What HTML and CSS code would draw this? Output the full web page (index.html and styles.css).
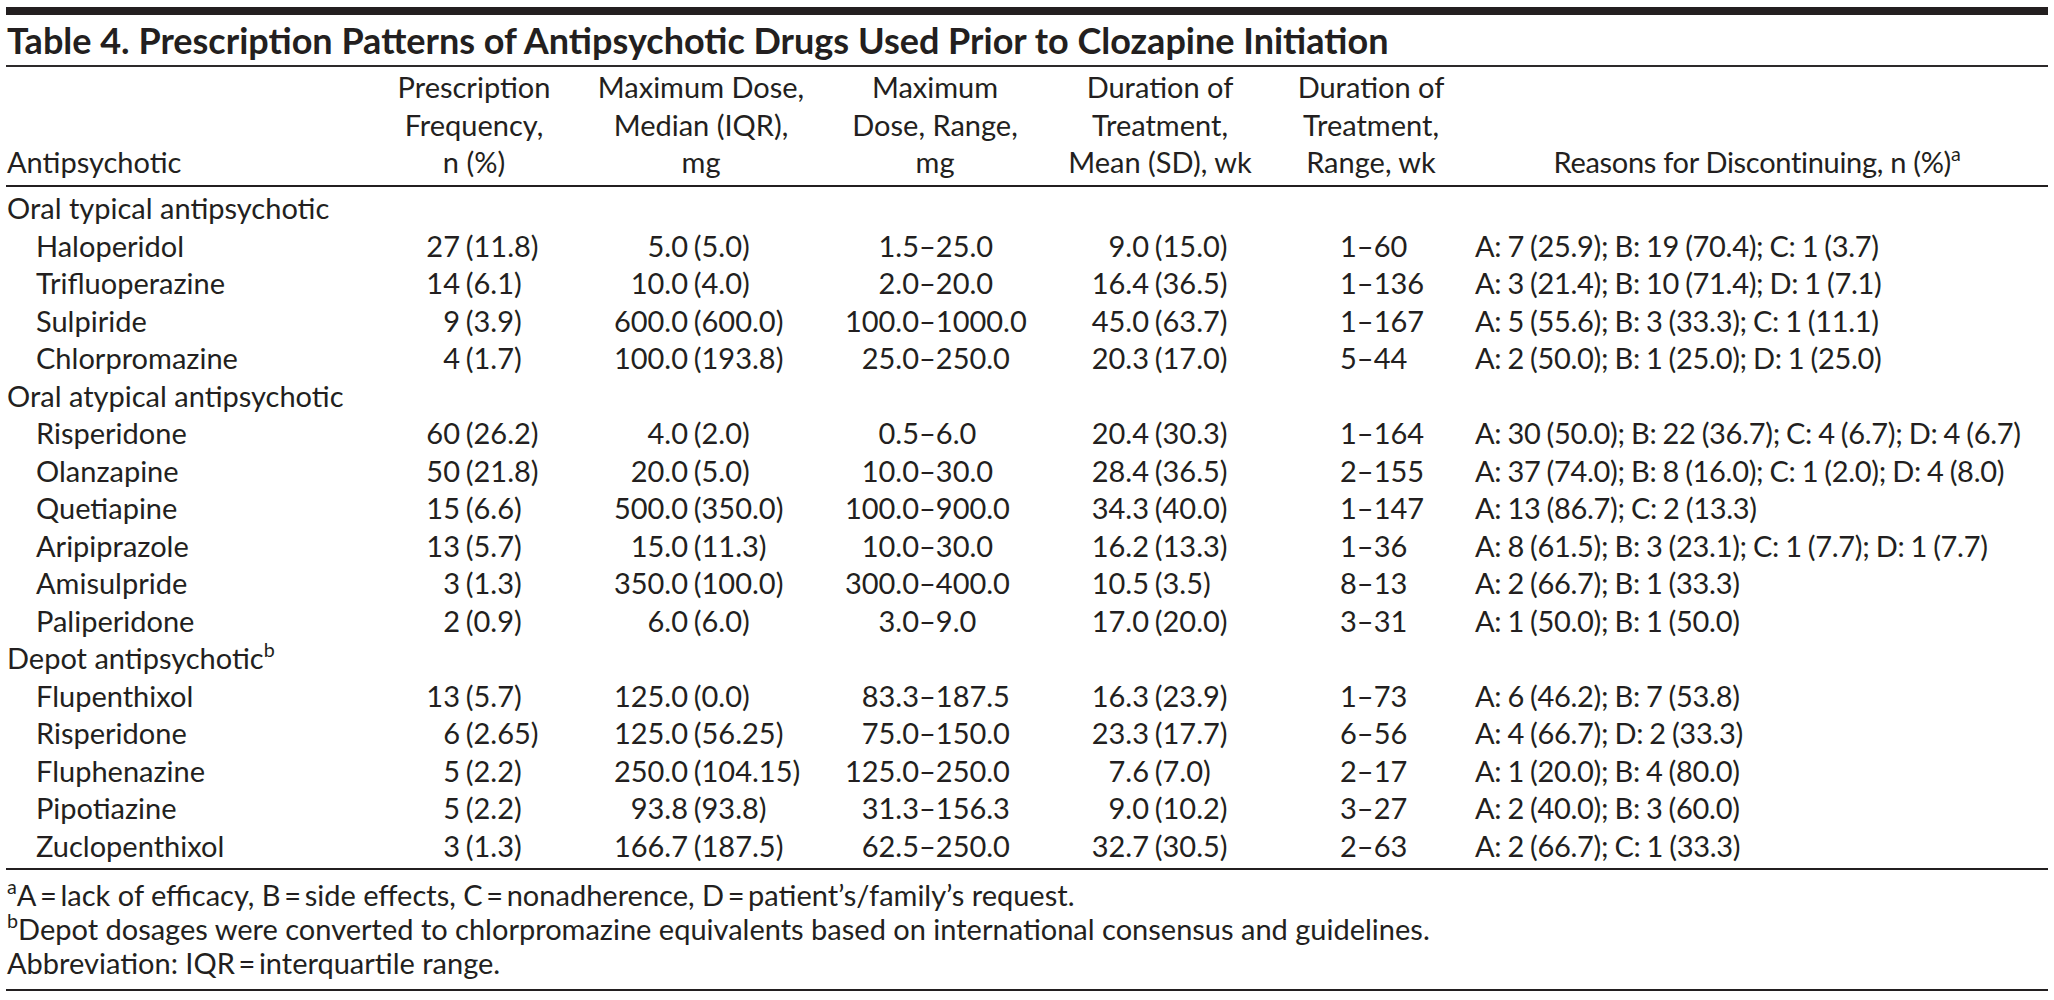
FILE: index.html
```html
<!DOCTYPE html>
<html lang="en">
<head>
<meta charset="utf-8">
<title>Table 4</title>
<link rel="stylesheet" href="styles.css">
</head>
<body>
<div class="page">
  <div class="topbar"></div>
  <h1 class="title">Table 4. Prescription Patterns of Antipsychotic Drugs Used Prior to Clozapine Initiation</h1>

  <div class="grid head">
    <div class="h h0">Antipsychotic</div>
    <div class="h">Prescription<br>Frequency,<br>n (%)</div>
    <div class="h">Maximum Dose,<br>Median (IQR),<br>mg</div>
    <div class="h">Maximum<br>Dose, Range,<br>mg</div>
    <div class="h">Duration of<br>Treatment,<br>Mean (SD), wk</div>
    <div class="h">Duration of<br>Treatment,<br>Range, wk</div>
    <div class="h h6">Reasons for Discontinuing, n (%)<sup>a</sup></div>
  </div>

  <div class="body">
    <div class="grid row"><div class="c0">Oral typical antipsychotic</div></div>
    <div class="grid row"><div class="c0 item">Haloperidol</div><div class="num c1"><span class="l">27</span><span class="r">(11.8)</span></div><div class="num c2"><span class="l">5.0</span><span class="r">(5.0)</span></div><div class="rng c3"><span class="l">1.5</span><span>–25.0</span></div><div class="num c4"><span class="l">9.0</span><span class="r">(15.0)</span></div><div class="c5">1–60</div><div class="c6">A: 7 (25.9); B: 19 (70.4); C: 1 (3.7)</div></div>
    <div class="grid row"><div class="c0 item">Trifluoperazine</div><div class="num c1"><span class="l">14</span><span class="r">(6.1)</span></div><div class="num c2"><span class="l">10.0</span><span class="r">(4.0)</span></div><div class="rng c3"><span class="l">2.0</span><span>–20.0</span></div><div class="num c4"><span class="l">16.4</span><span class="r">(36.5)</span></div><div class="c5">1–136</div><div class="c6">A: 3 (21.4); B: 10 (71.4); D: 1 (7.1)</div></div>
    <div class="grid row"><div class="c0 item">Sulpiride</div><div class="num c1"><span class="l">9</span><span class="r">(3.9)</span></div><div class="num c2"><span class="l">600.0</span><span class="r">(600.0)</span></div><div class="rng c3"><span class="l">100.0</span><span>–1000.0</span></div><div class="num c4"><span class="l">45.0</span><span class="r">(63.7)</span></div><div class="c5">1–167</div><div class="c6">A: 5 (55.6); B: 3 (33.3); C: 1 (11.1)</div></div>
    <div class="grid row"><div class="c0 item">Chlorpromazine</div><div class="num c1"><span class="l">4</span><span class="r">(1.7)</span></div><div class="num c2"><span class="l">100.0</span><span class="r">(193.8)</span></div><div class="rng c3"><span class="l">25.0</span><span>–250.0</span></div><div class="num c4"><span class="l">20.3</span><span class="r">(17.0)</span></div><div class="c5">5–44</div><div class="c6">A: 2 (50.0); B: 1 (25.0); D: 1 (25.0)</div></div>
    <div class="grid row"><div class="c0">Oral atypical antipsychotic</div></div>
    <div class="grid row"><div class="c0 item">Risperidone</div><div class="num c1"><span class="l">60</span><span class="r">(26.2)</span></div><div class="num c2"><span class="l">4.0</span><span class="r">(2.0)</span></div><div class="rng c3"><span class="l">0.5</span><span>–6.0</span></div><div class="num c4"><span class="l">20.4</span><span class="r">(30.3)</span></div><div class="c5">1–164</div><div class="c6">A: 30 (50.0); B: 22 (36.7); C: 4 (6.7); D: 4 (6.7)</div></div>
    <div class="grid row"><div class="c0 item">Olanzapine</div><div class="num c1"><span class="l">50</span><span class="r">(21.8)</span></div><div class="num c2"><span class="l">20.0</span><span class="r">(5.0)</span></div><div class="rng c3"><span class="l">10.0</span><span>–30.0</span></div><div class="num c4"><span class="l">28.4</span><span class="r">(36.5)</span></div><div class="c5">2–155</div><div class="c6">A: 37 (74.0); B: 8 (16.0); C: 1 (2.0); D: 4 (8.0)</div></div>
    <div class="grid row"><div class="c0 item">Quetiapine</div><div class="num c1"><span class="l">15</span><span class="r">(6.6)</span></div><div class="num c2"><span class="l">500.0</span><span class="r">(350.0)</span></div><div class="rng c3"><span class="l">100.0</span><span>–900.0</span></div><div class="num c4"><span class="l">34.3</span><span class="r">(40.0)</span></div><div class="c5">1–147</div><div class="c6">A: 13 (86.7); C: 2 (13.3)</div></div>
    <div class="grid row"><div class="c0 item">Aripiprazole</div><div class="num c1"><span class="l">13</span><span class="r">(5.7)</span></div><div class="num c2"><span class="l">15.0</span><span class="r">(11.3)</span></div><div class="rng c3"><span class="l">10.0</span><span>–30.0</span></div><div class="num c4"><span class="l">16.2</span><span class="r">(13.3)</span></div><div class="c5">1–36</div><div class="c6">A: 8 (61.5); B: 3 (23.1); C: 1 (7.7); D: 1 (7.7)</div></div>
    <div class="grid row"><div class="c0 item">Amisulpride</div><div class="num c1"><span class="l">3</span><span class="r">(1.3)</span></div><div class="num c2"><span class="l">350.0</span><span class="r">(100.0)</span></div><div class="rng c3"><span class="l">300.0</span><span>–400.0</span></div><div class="num c4"><span class="l">10.5</span><span class="r">(3.5)</span></div><div class="c5">8–13</div><div class="c6">A: 2 (66.7); B: 1 (33.3)</div></div>
    <div class="grid row"><div class="c0 item">Paliperidone</div><div class="num c1"><span class="l">2</span><span class="r">(0.9)</span></div><div class="num c2"><span class="l">6.0</span><span class="r">(6.0)</span></div><div class="rng c3"><span class="l">3.0</span><span>–9.0</span></div><div class="num c4"><span class="l">17.0</span><span class="r">(20.0)</span></div><div class="c5">3–31</div><div class="c6">A: 1 (50.0); B: 1 (50.0)</div></div>
    <div class="grid row"><div class="c0">Depot antipsychotic<sup>b</sup></div></div>
    <div class="grid row"><div class="c0 item">Flupenthixol</div><div class="num c1"><span class="l">13</span><span class="r">(5.7)</span></div><div class="num c2"><span class="l">125.0</span><span class="r">(0.0)</span></div><div class="rng c3"><span class="l">83.3</span><span>–187.5</span></div><div class="num c4"><span class="l">16.3</span><span class="r">(23.9)</span></div><div class="c5">1–73</div><div class="c6">A: 6 (46.2); B: 7 (53.8)</div></div>
    <div class="grid row"><div class="c0 item">Risperidone</div><div class="num c1"><span class="l">6</span><span class="r">(2.65)</span></div><div class="num c2"><span class="l">125.0</span><span class="r">(56.25)</span></div><div class="rng c3"><span class="l">75.0</span><span>–150.0</span></div><div class="num c4"><span class="l">23.3</span><span class="r">(17.7)</span></div><div class="c5">6–56</div><div class="c6">A: 4 (66.7); D: 2 (33.3)</div></div>
    <div class="grid row"><div class="c0 item">Fluphenazine</div><div class="num c1"><span class="l">5</span><span class="r">(2.2)</span></div><div class="num c2"><span class="l">250.0</span><span class="r">(104.15)</span></div><div class="rng c3"><span class="l">125.0</span><span>–250.0</span></div><div class="num c4"><span class="l">7.6</span><span class="r">(7.0)</span></div><div class="c5">2–17</div><div class="c6">A: 1 (20.0); B: 4 (80.0)</div></div>
    <div class="grid row"><div class="c0 item">Pipotiazine</div><div class="num c1"><span class="l">5</span><span class="r">(2.2)</span></div><div class="num c2"><span class="l">93.8</span><span class="r">(93.8)</span></div><div class="rng c3"><span class="l">31.3</span><span>–156.3</span></div><div class="num c4"><span class="l">9.0</span><span class="r">(10.2)</span></div><div class="c5">3–27</div><div class="c6">A: 2 (40.0); B: 3 (60.0)</div></div>
    <div class="grid row"><div class="c0 item">Zuclopenthixol</div><div class="num c1"><span class="l">3</span><span class="r">(1.3)</span></div><div class="num c2"><span class="l">166.7</span><span class="r">(187.5)</span></div><div class="rng c3"><span class="l">62.5</span><span>–250.0</span></div><div class="num c4"><span class="l">32.7</span><span class="r">(30.5)</span></div><div class="c5">2–63</div><div class="c6">A: 2 (66.7); C: 1 (33.3)</div></div>
  </div>

  <div class="notes">
    <p><sup>a</sup>A&thinsp;=&thinsp;lack of efficacy, B&thinsp;=&thinsp;side effects, C&thinsp;=&thinsp;nonadherence, D&thinsp;=&thinsp;patient’s/family’s request.</p>
    <p><sup>b</sup>Depot dosages were converted to chlorpromazine equivalents based on international consensus and guidelines.</p>
    <p>Abbreviation: IQR&thinsp;=&thinsp;interquartile range.</p>
  </div>
</div>
</body>
</html>
```

FILE: styles.css
```css
* { box-sizing: border-box; }

body {
  margin: 0;
  background: #ffffff;
  color: #231f20;
  font-family: Lato, "Open Sans", sans-serif;
  font-size: 29px;
}

.page {
  margin: 0 6px;
  padding-top: 7px;
}

.topbar {
  height: 8px;
  background: #231f20;
}

.title {
  margin: 0;
  padding-left: 1px;
  font-size: 36px;
  font-weight: 700;
  line-height: 50px;
  white-space: nowrap;
  border-bottom: 2px solid #2d2a2b;
}

.grid {
  display: grid;
  grid-template-columns: 374px 188px 266px 202px 248px 174px 590px;
}

.head {
  padding: 1.3px 0 4.2px;
  line-height: 37.5px;
  align-items: end;
  border-bottom: 2px solid #231f20;
}

.h { text-align: center; white-space: nowrap; }
.h0 { text-align: left; padding-left: 1px; }
.h6 { padding-left: 8px; letter-spacing: -0.3px; }

.body {
  padding: 2.2px 0 3.8px;
  border-bottom: 2px solid #231f20;
}

.row {
  line-height: 37.5px;
  white-space: nowrap;
}

.c0 { padding-left: 1px; }
.c0.item { padding-left: 30px; }

.num, .rng { display: flex; }
.num .l, .rng .l { flex: none; text-align: right; }
.num .r { margin-left: 0.2em; }

.c1 .l { width: 80px; }
.c2 .l { width: 120px; }
.c3 .l { width: 85px; }
.c4 .l { width: 113px; }

.c5 { padding-left: 56px; }
.c6 {
  padding-left: 17px;
  letter-spacing: -0.3px;
  word-spacing: -1px;
}

.notes {
  padding: 7.8px 0 9.2px 1px;
  line-height: 34px;
  border-bottom: 2px solid #231f20;
}

.notes p { margin: 0; white-space: nowrap; }

sup {
  font-size: 0.68em;
  line-height: 0;
  vertical-align: 0.62em;
}
```
